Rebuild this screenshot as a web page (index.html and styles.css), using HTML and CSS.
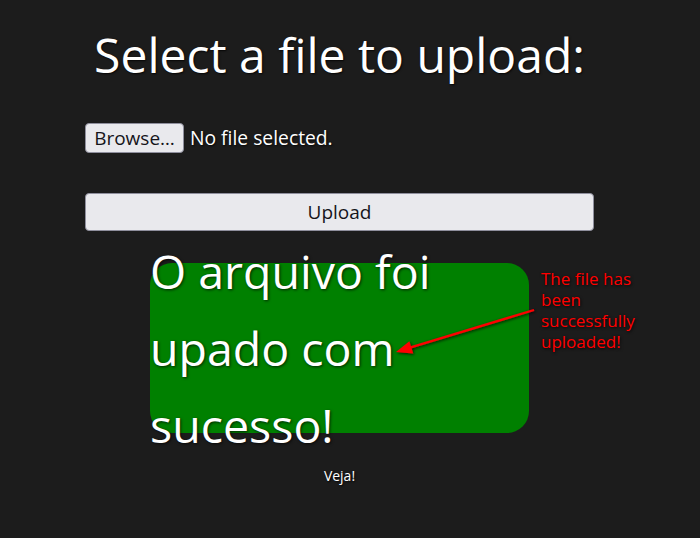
FILE: index.html
```html
<!DOCTYPE html>
<html lang="pt">
<head>
<meta charset="utf-8">
<title>Upload</title>
<link rel="stylesheet" href="styles.css">
</head>
<body>
<div class="wrap">
  <h1 class="title">Select a file to upload:</h1>
  <div class="file-row">
    <button class="btn browse" type="button">Browse…</button>
    <span class="file-status">No file selected.</span>
  </div>
  <button class="btn upload" type="button">Upload</button>
  <div class="result">
    <p class="result-text">O arquivo foi upado com sucesso!</p>
  </div>
  <p class="veja">Veja!</p>
</div>
<div class="note">The file has been successfully uploaded!</div>
<svg class="arrow" width="700" height="538" viewBox="0 0 700 538">
  <defs>
    <filter id="sh" x="-20%" y="-50%" width="140%" height="200%">
      <feDropShadow dx="1" dy="1" stdDeviation="1.5" flood-color="#000" flood-opacity="0.8"/>
    </filter>
  </defs>
  <g filter="url(#sh)">
    <line x1="534" y1="310" x2="410" y2="347.6" stroke="#ff0000" stroke-width="2.2"/>
    <polygon points="396,352 413.2,353.4 409.4,341.2" fill="#ff0000"/>
  </g>
</svg>
</body>
</html>
```
FILE: styles.css
```css
html, body {
  margin: 0;
  padding: 0;
}
body {
  background: #1c1c1c;
  color: #ffffff;
  font-family: "Open Sans", "Noto Sans", sans-serif;
  width: 700px;
  height: 538px;
  overflow: hidden;
  position: relative;
}
.wrap {
  margin-left: 85px;
  width: 509px;
  padding-top: 22px;
  display: flex;
  flex-direction: column;
}
.title {
  margin: 0;
  font-size: 48px;
  font-weight: 400;
  line-height: 65px;
  text-align: center;
  white-space: nowrap;
  text-shadow: 1px 1px 2px rgba(0,0,0,0.8);
}
.file-row {
  margin-top: 36px;
  display: flex;
  align-items: center;
  gap: 6px;
  font-size: 19.3px;
}
.btn {
  font-family: "Open Sans", "Noto Sans", sans-serif;
  font-size: 19px;
  color: #15141a;
  background: #e9e9ed;
  border: 1px solid #8f8f9d;
  border-radius: 4px;
  padding: 0;
  line-height: 26px;
}
.browse {
  width: 99px;
  height: 30px;
}
.file-status {
  line-height: 26px;
  text-shadow: 1px 1px 2px rgba(0,0,0,0.8);
}
.upload {
  margin-top: 40px;
  width: 509px;
  height: 38px;
}
.result {
  margin-top: 32px;
  margin-left: 65px;
  width: 379px;
  height: 170px;
  background: #008000;
  border-radius: 22px;
  display: flex;
  align-items: center;
}
.result-text {
  margin: 0;
  font-size: 46.5px;
  line-height: 77px;
  text-shadow: 1px 1px 3px rgba(0,0,0,0.7);
}
.veja {
  margin: 33px 0 0;
  text-align: center;
  font-size: 14px;
  line-height: 19px;
  text-shadow: 1px 1px 2px rgba(0,0,0,0.9);
}
.note {
  position: absolute;
  left: 541px;
  top: 268px;
  width: 112px;
  color: #ff0000;
  font-size: 17px;
  line-height: 21px;
  text-shadow: 1px 1px 3px rgba(0,0,0,0.9);
}
.arrow {
  position: absolute;
  left: 0;
  top: 0;
  pointer-events: none;
}
```
